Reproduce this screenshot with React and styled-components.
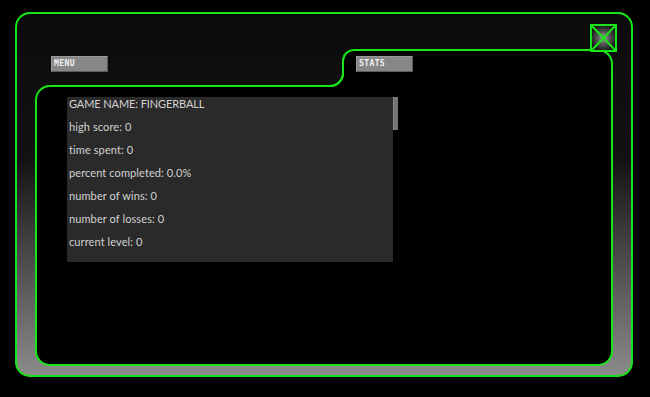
import React from "react";
import styled, { createGlobalStyle } from "styled-components";

const GREEN = "#19e619";

const Global = createGlobalStyle`
  html, body { margin: 0; padding: 0; background: #000; }
  body { font-family: Lato, "Open Sans", sans-serif; }
`;

const Page = styled.div`
  width: 650px;
  height: 397px;
  background: #000;
  padding: 12px 0 0 15px;
  box-sizing: border-box;
`;

const Window = styled.div`
  position: relative;
  width: 618px;
  height: 365px;
  box-sizing: border-box;
  border: 2px solid ${GREEN};
  border-radius: 15px;
  background: linear-gradient(to bottom, #0b0b0b 0%, #121212 40%, #8b8b8b 100%);
  padding: 35px 18px 9px 18px;
  display: flex;
  flex-direction: column;
`;

const CloseButton = styled.button`
  position: absolute;
  left: 573px;
  top: 10px;
  width: 27px;
  height: 28px;
  box-sizing: border-box;
  padding: 0;
  border: 2px solid ${GREEN};
  background: radial-gradient(circle at 50% 50%, #a8a8a8 0%, #5a5a5a 35%, #1c1c1c 75%, #111 100%);
  z-index: 3;
  cursor: pointer;
  svg { display: block; width: 100%; height: 100%; }
`;

const TopRow = styled.div`
  display: flex;
  height: 36px;
  align-items: flex-start;
  flex: none;
`;

const LeftArea = styled.div`
  flex: 1;
  padding: 7px 0 0 16px;
`;

const Tab = styled.div`
  position: relative;
  z-index: 1;
  width: 271px;
  height: 24px;
  box-sizing: border-box;
  border: 2px solid ${GREEN};
  border-bottom: none;
  border-radius: 12px 15px 0 0;
  background: #000;
  padding: 5px 0 0 12px;

  &::after {
    content: "";
    position: absolute;
    top: 100%;
    left: -14px;
    right: -2px;
    height: 14px;
    box-sizing: border-box;
    border-right: 2px solid ${GREEN};
    background: radial-gradient(
      circle at 0 0,
      transparent 11.4px,
      ${GREEN} 12.2px,
      ${GREEN} 13.8px,
      #000 14.6px
    );
  }
`;

const NavButton = styled.div`
  width: 57px;
  height: 16px;
  box-sizing: border-box;
  background: #878787;
  border: 1px solid #5a5a5a;
  border-top-color: #9a9a9a;
  border-left-color: #9a9a9a;
  color: #f2f2f2;
  font-family: "DejaVu Sans Mono", monospace;
  font-weight: bold;
  font-size: 8px;
  letter-spacing: 0.4px;
  line-height: 14px;
  padding-left: 2px;
  text-transform: uppercase;
`;

const Body = styled.div`
  flex: 1;
  border: 2px solid ${GREEN};
  border-radius: 15px 0 15px 15px;
  background: #000;
  padding: 10px 0 0 30px;
`;

const PanelRow = styled.div`
  display: flex;
  align-items: flex-start;
`;

const StatsPanel = styled.div`
  width: 326px;
  height: 165px;
  background: #2a2a2a;
  padding: 0 0 0 2px;
  box-sizing: border-box;
  display: flex;
  flex-direction: column;
  gap: 10px;
  overflow: hidden;
`;

const ScrollTrack = styled.div`
  width: 5px;
  height: 165px;
`;

const ScrollThumb = styled.div`
  height: 33px;
  background: #737373;
  border-left: 1px solid #8a8a8a;
  box-sizing: border-box;
`;

const StatLine = styled.div`
  font-family: Lato, "Open Sans", sans-serif;
  font-size: 11px;
  line-height: 13px;
  color: #d2d2d2;
  letter-spacing: ${(p) => (p.$title ? "-0.1px" : "0.1px")};
  text-transform: ${(p) => (p.$title ? "uppercase" : "none")};
  white-space: nowrap;
`;

const stats = [
  "high score: 0",
  "time spent: 0",
  "percent completed: 0.0%",
  "number of wins: 0",
  "number of losses: 0",
  "current level: 0",
];

export default function App() {
  return (
    <>
      <Global />
      <Page>
        <Window>
          <CloseButton aria-label="close">
            <svg viewBox="0 0 23 24" preserveAspectRatio="none">
              <line x1="0" y1="0" x2="23" y2="24" stroke={GREEN} strokeWidth="2" />
              <line x1="23" y1="0" x2="0" y2="24" stroke={GREEN} strokeWidth="2" />
            </svg>
          </CloseButton>
          <TopRow>
            <LeftArea>
              <NavButton>Menu</NavButton>
            </LeftArea>
            <Tab>
              <NavButton>Stats</NavButton>
            </Tab>
          </TopRow>
          <Body>
            <PanelRow>
              <StatsPanel>
                <StatLine $title>Game Name: Fingerball</StatLine>
                {stats.map((s) => (
                  <StatLine key={s}>{s}</StatLine>
                ))}
              </StatsPanel>
              <ScrollTrack>
                <ScrollThumb />
              </ScrollTrack>
            </PanelRow>
          </Body>
        </Window>
      </Page>
    </>
  );
}
